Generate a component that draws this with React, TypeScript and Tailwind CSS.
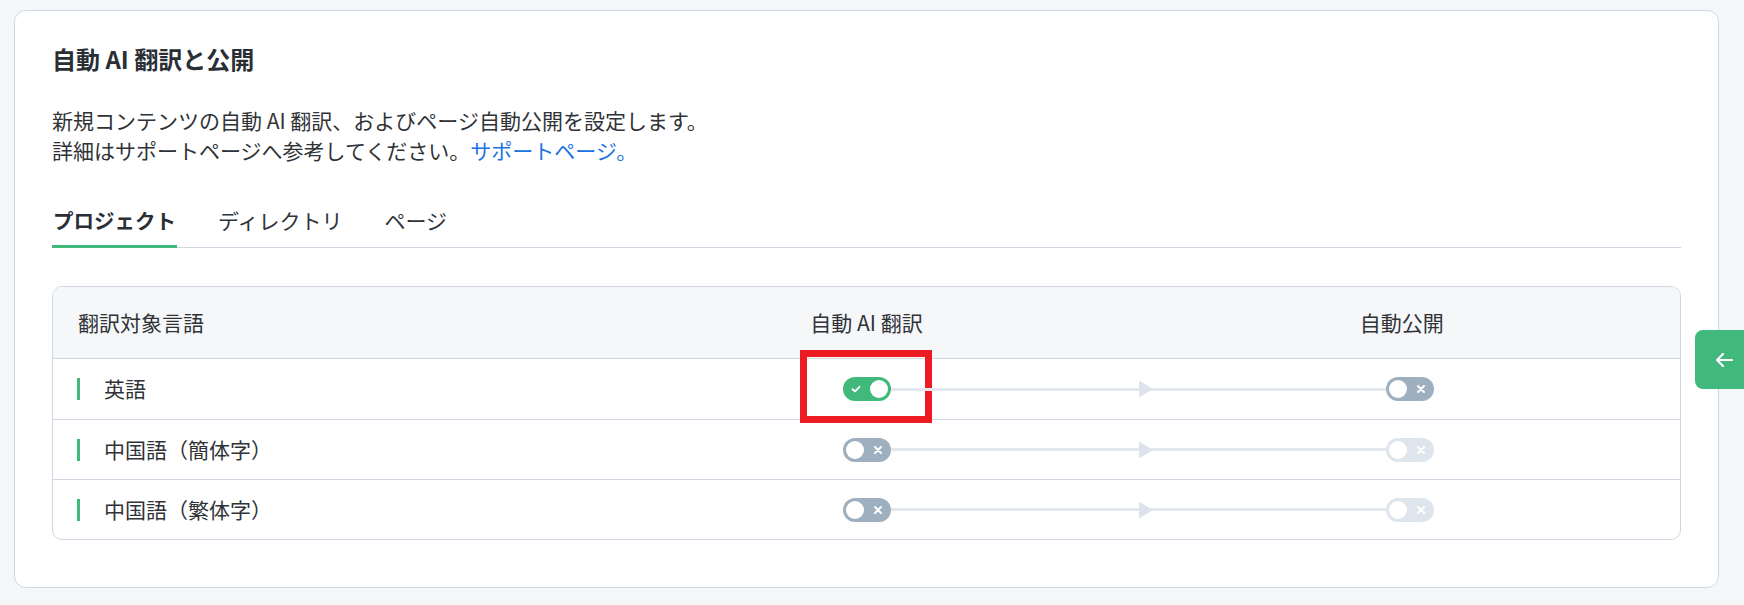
import { useState } from 'react'

type Lang = { name: string, ai: boolean, publishDisabled: boolean }

const langs: Lang[] = [
  { name: '英語', ai: true, publishDisabled: false },
  { name: '中国語（簡体字）', ai: false, publishDisabled: true },
  { name: '中国語（繁体字）', ai: false, publishDisabled: true },
]

function Toggle({ on, disabled }: { on: boolean, disabled?: boolean }) {
  const bg = on ? 'bg-[#41b97a]' : disabled ? 'bg-[#dfe5ec]' : 'bg-[#9eafbf]'
  return (
    <div className={`relative w-[48px] h-[24px] rounded-full shrink-0 ${ bg }`}>
      { on ? (
        <>
          <svg className="absolute left-[8px] top-[7px]" width="10" height="10" viewBox="0 0 10 10">
            <path d="M1.5 5.2 L4 7.4 L8.5 2.8" fill="none" stroke="white" strokeWidth="1.9" strokeLinecap="round" strokeLinejoin="round" />
          </svg>
          <span className="absolute right-[3px] top-[3px] w-[18px] h-[18px] rounded-full bg-white" />
        </>
      ) : (
        <>
          <span className="absolute left-[3px] top-[3px] w-[18px] h-[18px] rounded-full bg-white" />
          <svg className="absolute right-[9px] top-[8px]" width="8" height="8" viewBox="0 0 8 8">
            <path d="M1 1 L7 7 M7 1 L1 7" fill="none" stroke="white" strokeWidth="2" strokeLinecap="round" />
          </svg>
        </>
      ) }
    </div>
  )
}

export default function App() {
  const [ tab, setTab ] = useState('project')
  const tabs = [
    { id: 'project', label: 'プロジェクト' },
    { id: 'directory', label: 'ディレクトリ' },
    { id: 'page', label: 'ページ' },
  ]

  return (
    <div className="relative min-h-[605px] bg-[#f5f6f8] pt-[10px] pl-[14px] pr-[25px] font-['Noto_Sans_CJK_JP',sans-serif] text-[#2f3337]">
      <section className="bg-white border border-[#cfd8e2] rounded-[12px] px-[37px] pt-[32px] pb-[47px]">
        <h2 className="text-[24px] leading-[32px] font-bold text-[#2a2f35]">自動 AI 翻訳と公開</h2>
        <p className="mt-[30px] text-[21px] leading-[30px]">
          新規コンテンツの自動 AI 翻訳、およびページ自動公開を設定します。<br />
          詳細はサポートページへ参考してください。<a href="#" className="text-[#1a73e0]">サポートページ。</a>
        </p>

        <div className="mt-[40px] flex gap-[40px] border-b border-[#cfd8e2]">
          { tabs.map(t => (
            <button key={ t.id } onClick={ () => setTab(t.id) } className={`relative px-[1px] pb-[12px] leading-[30px] cursor-pointer ${ tab === t.id ? 'text-[20.5px] font-bold text-[#2a2f35]' : 'text-[21px] text-[#2f3337]' }`}>
              { t.label }
              { tab === t.id && <span className="absolute left-0 right-0 -bottom-[1px] h-[3px] bg-[#41b97a]" /> }
            </button>
          )) }
        </div>

        <div className="mt-[38px] border border-[#cfd8e2] rounded-[10px] overflow-hidden text-[21px]">
          <div className="grid grid-cols-3 h-[72px] items-center bg-[#f6f7f9] border-b border-[#cfd8e2]">
            <span className="pl-[25px]">翻訳対象言語</span>
            <span className="text-center">自動 AI 翻訳</span>
            <span className="text-center pr-[14px]">自動公開</span>
          </div>
          { langs.map((l, i) => (
            <div key={ l.name } className={`grid grid-cols-3 h-[60px] items-center ${ i > 0 ? 'border-t border-[#cfd8e2]' : '' }`}>
              <div className="flex items-center pl-[24px]">
                <span className="w-[3px] h-[22px] bg-[#41b97a]" />
                <span className="ml-[24px]">{ l.name }</span>
              </div>
              <div className="col-span-2 flex items-center pl-[248px] pr-[246px]">
                <div className="relative">
                  <Toggle on={ l.ai } />
                  { i === 0 && <span className="absolute -left-[43px] -top-[27px] w-[132px] h-[73px] border-[7px] border-[#ed1c24] pointer-events-none" /> }
                </div>
                <div className="relative flex-1 h-[3px] bg-[#e3e8ef]">
                  <svg className="absolute left-1/2 top-1/2 -translate-y-1/2" width="14" height="17" viewBox="0 0 14 17">
                    <polygon points="0,0 14,8.5 0,17" fill="#dce3ec" />
                  </svg>
                </div>
                <Toggle on={ false } disabled={ l.publishDisabled } />
              </div>
            </div>
          )) }
        </div>
      </section>

      <button className="absolute right-0 top-[330px] w-[49px] h-[59px] bg-[#42b97c] rounded-l-[8px] flex items-center pl-[20px] cursor-pointer">
        <svg width="18" height="14" viewBox="0 0 18 14">
          <path d="M17 7 H2 M8 1 L2 7 L8 13" fill="none" stroke="white" strokeWidth="2.2" strokeLinecap="round" strokeLinejoin="round" />
        </svg>
      </button>
    </div>
  )
}
